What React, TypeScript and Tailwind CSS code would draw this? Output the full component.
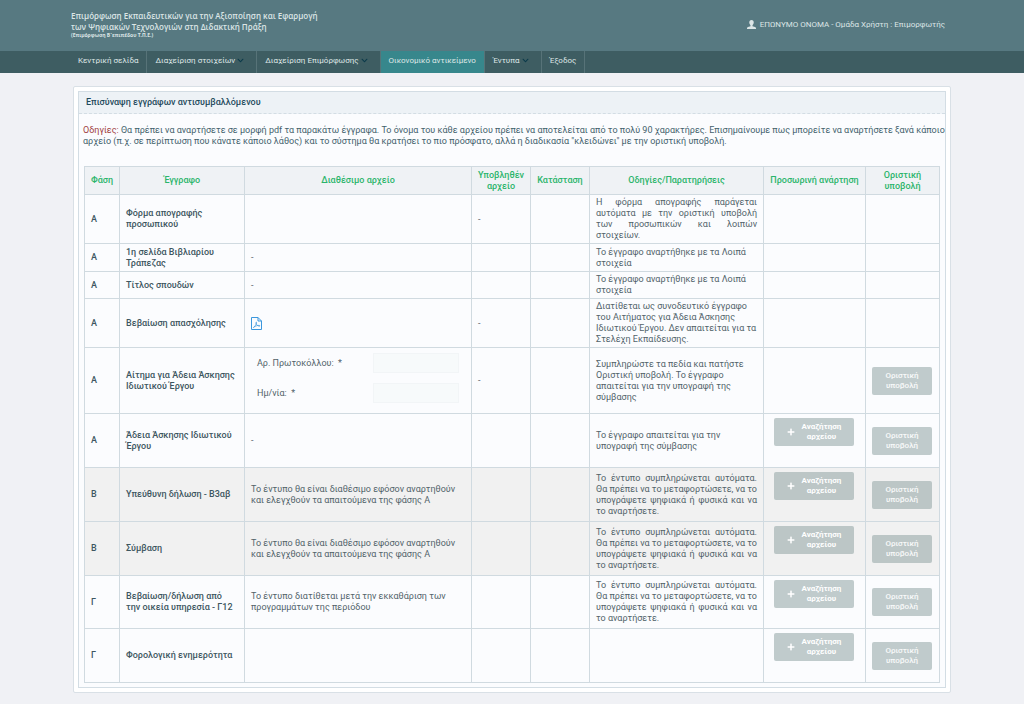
import { FaChevronDown, FaPlus } from "react-icons/fa";

const navItems = [
    { label: "Κεντρική σελίδα" },
    { label: "Διαχείριση στοιχείων", menu: true },
    { label: "Διαχείριση Επιμόρφωσης", menu: true },
    { label: "Οικονομικό αντικείμενο", active: true },
    { label: "Έντυπα", menu: true },
    { label: "Έξοδος" },
];

const autoForm =
    "Το έντυπο συμπληρώνεται αυτόματα. Θα πρέπει να το μεταφορτώσετε, να το υπογράψετε ψηφιακά ή φυσικά και να το αναρτήσετε.";
const afterPhaseA = "Το έντυπο θα είναι διαθέσιμο εφόσον αναρτηθούν και ελεγχθούν τα απαιτούμενα της φάσης Α";

type Row = {
    phase: string;
    title: string;
    file?: string;
    submitted?: string;
    notes?: string;
    justify?: boolean;
    upload?: boolean;
    submit?: boolean;
    shaded?: boolean;
    height: string;
};

const rows: Row[] = [
    {
        phase: "Α",
        title: "Φόρμα απογραφής προσωπικού",
        submitted: "-",
        notes: "Η φόρμα απογραφής παράγεται αυτόματα με την οριστική υποβολή των προσωπικών και λοιπών στοιχείων.",
        justify: true,
        height: "h-[49px]",
    },
    { phase: "Α", title: "1η σελίδα Βιβλιαρίου Τράπεζας", file: "-", notes: "Το έγγραφο αναρτήθηκε με τα Λοιπά στοιχεία", height: "h-[28px]" },
    { phase: "Α", title: "Τίτλος σπουδών", file: "-", notes: "Το έγγραφο αναρτήθηκε με τα Λοιπά στοιχεία", height: "h-[27px]" },
    {
        phase: "Α",
        title: "Βεβαίωση απασχόλησης",
        file: "pdf",
        submitted: "-",
        notes: "Διατίθεται ως συνοδευτικό έγγραφο του Αιτήματος για Άδεια Άσκησης Ιδιωτικού Έργου. Δεν απαιτείται για τα Στελέχη Εκπαίδευσης.",
        height: "h-[49px]",
    },
    {
        phase: "Α",
        title: "Αίτημα για Άδεια Άσκησης Ιδιωτικού Έργου",
        file: "form",
        submitted: "-",
        notes: "Συμπληρώστε τα πεδία και πατήστε Οριστική υποβολή. Το έγγραφο απαιτείται για την υπογραφή της σύμβασης",
        submit: true,
        height: "h-[66px]",
    },
    {
        phase: "Α",
        title: "Άδεια Άσκησης Ιδιωτικού Έργου",
        file: "-",
        notes: "Το έγγραφο απαιτείται για την υπογραφή της σύμβασης",
        upload: true,
        submit: true,
        height: "h-[54px]",
    },
    { phase: "Β", title: "Υπεύθυνη δήλωση - Β3αβ", file: afterPhaseA, notes: autoForm, justify: true, upload: true, submit: true, shaded: true, height: "h-[54px]" },
    { phase: "Β", title: "Σύμβαση", file: afterPhaseA, notes: autoForm, justify: true, upload: true, submit: true, shaded: true, height: "h-[54px]" },
    {
        phase: "Γ",
        title: "Βεβαίωση/δήλωση από την οικεία υπηρεσία - Γ12",
        file: "Το έντυπο διατίθεται μετά την εκκαθάριση των προγραμμάτων της περιόδου",
        notes: autoForm,
        justify: true,
        upload: true,
        submit: true,
        height: "h-[53px]",
    },
    { phase: "Γ", title: "Φορολογική ενημερότητα", upload: true, submit: true, height: "h-[54px]" },
];

const UserIcon = () => (
    <svg className="h-[9px] w-[9px]" viewBox="0 0 18 18" fill="currentColor" aria-hidden="true">
        <path d="M9 0c3 0 4.500 2.200 4.500 5 0 2-.8 3.600-1.800 4.700-.5.600-.7 1.200-.7 2v1l5 1.300c1.300.4 2 1.100 2 2.300V18H0v-1.700c0-1.200.7-1.900 2-2.300l5-1.300v-1c0-.8-.2-1.400-.7-2C5.300 8.600 4.500 7 4.500 5 4.500 2.200 6 0 9 0z" />
    </svg>
);

const PdfIcon = () => (
    <svg className="h-[13px] w-[11px]" viewBox="0 0 22 26" fill="none" stroke="#3b97dd" strokeWidth="2" aria-hidden="true">
        <path d="M1 1h13l7 7v17H1z" />
        <path d="M14 1v7h7" />
        <path d="M5 21c2-1 5-5.500 6-9 .6-2.500-1.500-2.500-1.200 0C10.300 15 13 18 17 18.500c1.500 0 1.200-1.800-.8-1.800-3.200 0-7.200 1.300-10.200 3.300-1.200.8-2 1.500-1 1z" strokeWidth="1.400" />
    </svg>
);

const RequestForm = () => (
    <div className="flex flex-col gap-[10px] px-[6px] pb-[5px]">
        <div className="flex items-center justify-between">
            <label htmlFor="protocol">Αρ. Πρωτοκόλλου: &nbsp;*</label>
            <input id="protocol" type="text" className="h-[20px] w-[86px] border border-[#f2f5f7] bg-[#f7fafb]" />
        </div>
        <div className="flex items-center justify-between">
            <label htmlFor="date">Ημ/νία: &nbsp;*</label>
            <input id="date" type="text" className="h-[20px] w-[86px] border border-[#f2f5f7] bg-[#f7fafb]" />
        </div>
    </div>
);

const FileCell = ({ file }: { file?: string }) => {
    if (file === "pdf") {
        return (
            <a href="#" aria-label="pdf" className="block">
                <PdfIcon />
            </a>
        );
    }
    if (file === "form") return <RequestForm />;
    return <>{file}</>;
};

const cell = "border border-[#d0dae0] px-[6px] py-0";

export default function App() {
    return (
        <div className="min-h-screen bg-[#f0f1f5] pb-[11px] font-['Roboto','Liberation_Sans',sans-serif] text-[9px] leading-[11px] text-[#52636a]">
            <header className="bg-[#577981] text-[#dce5e6]">
                <div className="mx-auto flex h-[51px] max-w-[882px] items-center justify-between pr-2 pb-[2px]">
                    <div className="font-['Open_Sans','Noto_Sans',sans-serif] font-semibold">
                        <p className="text-[8px] leading-[11px]">
                            Επιμόρφωση Εκπαιδευτικών για την Αξιοποίηση και Εφαρμογή
                            <br />
                            των Ψηφιακών Τεχνολογιών στη Διδακτική Πράξη
                        </p>
                        <p className="text-[5px] leading-[7px] font-bold">(Επιμόρφωση Β´επιπέδου Τ.Π.Ε.)</p>
                    </div>
                    <div className="flex items-center gap-1 text-[8px] font-medium">
                        <UserIcon />
                        <span className="font-normal">ΕΠΩΝΥΜΟ ΟΝΟΜΑ - Ομάδα Χρήστη : Επιμορφωτής</span>
                    </div>
                </div>
            </header>
            <nav className="bg-[#3e5d62] text-[8px] text-[#dfe7e7]">
                <ul className="mx-auto flex h-[22px] max-w-[884px]">
                    {navItems.map((item) => (
                        <li key={item.label} className={`border-r border-[#577378] ${item.active ? "bg-[#37878c]" : ""}`}>
                            <a href="#" className={`flex h-full items-center gap-[2px] pb-[3px] pl-[8px] ${item.menu ? "pr-[12px]" : "pr-[8px]"}`}>
                                {item.label}
                                {item.menu && <FaChevronDown className="h-[7px] w-[7px] text-[#0b3a4a]" />}
                            </a>
                        </li>
                    ))}
                </ul>
            </nav>

            <main className="mx-auto mt-[13px] max-w-[878px] rounded-[2px] border border-[#d9e0e6] bg-white p-[4px]">
                <section className="border border-[#d3dde4] bg-[#fbfcfe] pb-[4px]">
                    <h1 className="border-b border-dashed border-[#d3dde4] bg-[#edf2f6] px-[7px] py-[5px] text-[9px] font-medium text-[#1f4a5c]">
                        Επισύναψη εγγράφων αντισυμβαλλόμενου
                    </h1>
                    <p className="mt-[11px] pl-[4px] text-[#43616c]">
                        <span className="text-[#a04040]">Οδηγίες:</span> Θα πρέπει να αναρτήσετε σε μορφή pdf τα παρακάτω έγγραφα. Το όνομα του κάθε αρχείου
                        πρέπει να αποτελείται από το πολύ 90 χαρακτήρες. Επισημαίνουμε πως μπορείτε να αναρτήσετε ξανά κάποιο αρχείο (π.χ. σε περίπτωση που
                        κάνατε κάποιο λάθος) και το σύστημα θα κρατήσει το πιο πρόσφατο, αλλά η διαδικασία "κλειδώνει" με την οριστική υποβολή.
                    </p>
                    <div className="px-[5px]">
                        <table className="mt-[19px] w-full table-fixed border-collapse">
                            <colgroup>
                                <col className="w-[35px]" />
                                <col className="w-[125px]" />
                                <col />
                                <col className="w-[59px]" />
                                <col className="w-[59px]" />
                                <col className="w-[174px]" />
                                <col className="w-[102px]" />
                                <col className="w-[74px]" />
                            </colgroup>
                            <thead className="bg-[#eff2f5] text-[#2bb56b]">
                                <tr className="h-[28px]">
                                    {["Φάση", "Έγγραφο", "Διαθέσιμο αρχείο", "Υποβληθέν αρχείο", "Κατάσταση", "Οδηγίες/Παρατηρήσεις", "Προσωρινή ανάρτηση", "Οριστική υποβολή"].map((h) => (
                                        <th key={h} className="border border-[#d0dae0] px-[3px] py-0 font-medium">
                                            {h}
                                        </th>
                                    ))}
                                </tr>
                            </thead>
                            <tbody>
                                {rows.map((row) => (
                                    <tr key={row.title} className={`${row.height} ${row.shaded ? "bg-[#f1f1f1]" : ""}`}>
                                        <td className={`${cell} font-medium text-[#3d5660]`}>{row.phase}</td>
                                        <td className={`${cell} font-medium text-[#3d5660]`}>{row.title}</td>
                                        <td className={cell}>
                                            <FileCell file={row.file} />
                                        </td>
                                        <td className={cell}>{row.submitted}</td>
                                        <td className={cell}></td>
                                        <td className={`${cell} ${row.justify ? "text-justify" : ""}`}>{row.notes}</td>
                                        <td className="border border-[#d0dae0] pt-[4px] pl-[10px] align-top">
                                            {row.upload && (
                                                <button
                                                    type="button"
                                                    className="flex h-[28px] w-[80px] items-center justify-center gap-[7px] rounded-[2px] bg-[#8fa3a3]/55 text-[8px] leading-[10px] font-bold text-white"
                                                >
                                                    <FaPlus className="h-[8px] w-[8px]" />
                                                    <span>
                                                        Αναζήτηση
                                                        <br />
                                                        αρχείου
                                                    </span>
                                                </button>
                                            )}
                                        </td>
                                        <td className={cell}>
                                            {row.submit && (
                                                <button
                                                    type="button"
                                                    className="block h-[28px] w-[60px] rounded-[2px] bg-[#8fa3a3]/55 text-[8px] leading-[10px] font-medium text-white/90"
                                                >
                                                    Οριστική
                                                    <br />
                                                    υποβολή
                                                </button>
                                            )}
                                        </td>
                                    </tr>
                                ))}
                            </tbody>
                        </table>
                    </div>
                </section>
            </main>
        </div>
    );
}
